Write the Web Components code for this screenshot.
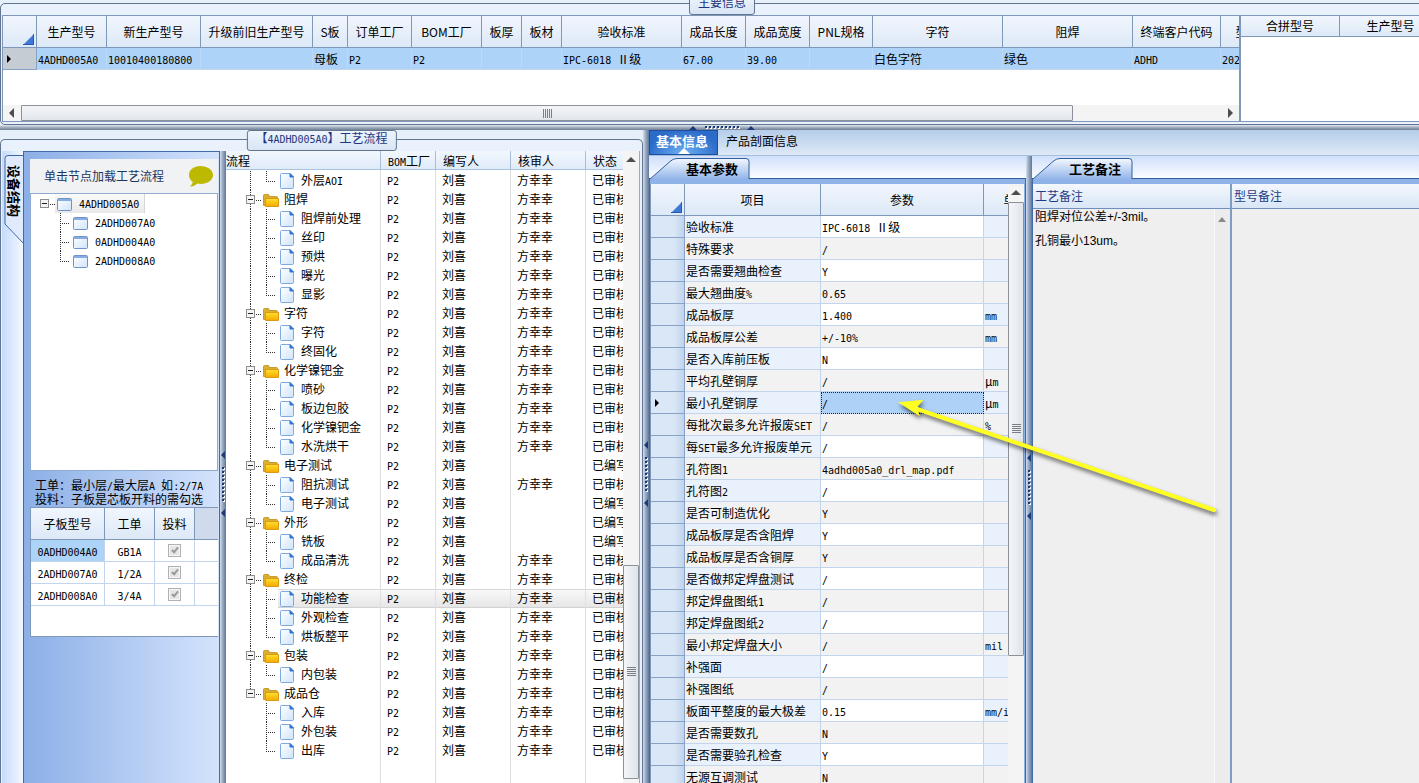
<!DOCTYPE html>
<html lang="zh-CN">
<head>
<meta charset="utf-8">
<title>工艺流程</title>
<style>
  html, body {
    margin: 0;
    height: 100%;
    overflow: hidden;
  }
  body {
    font-family: "Noto Sans CJK SC", sans-serif;
    font-size: 12px;
    line-height: 16px;
    color: #000;
    background: #e6f0fb;
  }
</style>
</head>
<body>
<process-app></process-app>

<script>
/** Rules that every component starts from. */
const baseStyle = `
  *, *::before, *::after { box-sizing: border-box; }
  table { border-collapse: separate; border-spacing: 0; table-layout: fixed; }
  th, td { padding: 0; font-weight: normal; white-space: nowrap; overflow: hidden; }
  button { margin: 0; padding: 0; border: 0; background: none; font: inherit; color: inherit; }
  .latin { font-family: "DejaVu Sans Mono", monospace; font-size: 10px; line-height: 1px; }
`;

/** Wraps the half-width runs of a text so that they take 6px per character. */
function halfWidth(text) {
  return text.replace(/[\x20-\x7e]+/g, (run) => `<span class="latin">${run}</span>`);
}

/** Attaches an open shadow root and fills it. */
function mount(host, style, html) {
  const root = host.shadowRoot || host.attachShadow({ mode: "open" });
  root.innerHTML = `<style>${baseStyle}${style}</style>${html}`;
  return root;
}

// <group-box caption="...">content</group-box>
class GroupBox extends HTMLElement {
  connectedCallback() {
    mount(this, `
      :host { display: flex; position: relative; min-height: 0; padding: 11px 2px 2px 1px;
        border: 1px solid #62748f; border-radius: 5px; background: #e9f2fc; }
      .caption { position: absolute; top: -10px; left: 50%; transform: translateX(-50%); z-index: 2;
        height: 21px; padding: 0 8px; line-height: 14px; white-space: nowrap; color: #1e3580;
        border: 1px solid #62748f; border-radius: 3px; background: linear-gradient(#eef4fc, #d8e5f5); }
    `, `<div class="caption">${halfWidth(this.getAttribute("caption"))}</div><slot></slot>`);
  }
}
customElements.define("group-box", GroupBox);

// <split-bar vertical></split-bar>, with the grip in its middle
class SplitBar extends HTMLElement {
  connectedCallback() {
    mount(this, `
      :host { display: flex; flex: none; align-items: center; justify-content: center; height: 5px; overflow: hidden;
        background: linear-gradient(#e3e9f1, #aab6c5 40%, #6f7f93); }
      :host([vertical]) { flex-direction: column; height: auto; width: 6px;
        background: linear-gradient(90deg, #d3dfee, #9fb0c6 40%, #5f7697); }
      svg { display: block; flex: none; }
    `, this.hasAttribute("vertical")
      ? `<svg width="6" height="66" viewBox="0 0 6 66"><path d="M5 0v8l-4-4zM5 58v8l-4-4z" fill="#1d3a78"/>
         <path d="M3 16v34" stroke="#fff" stroke-width="2" stroke-dasharray="2 2" transform="translate(1 1)"/>
         <path d="M3 16v34" stroke="#1d3a78" stroke-width="2" stroke-dasharray="2 2"/></svg>`
      : `<svg width="66" height="5" viewBox="0 0 66 5"><path d="M0 5h8l-4-4zM58 5h8l-4-4z" fill="#1d3a78"/>
         <path d="M16 2h34" stroke="#fff" stroke-width="2" stroke-dasharray="2 2" transform="translate(1 1)"/>
         <path d="M16 2h34" stroke="#1d3a78" stroke-width="2" stroke-dasharray="2 2"/></svg>`);
  }
}
customElements.define("split-bar", SplitBar);

// <scroll-bar vertical before="1" size="2" after="1"></scroll-bar>
class ScrollBar extends HTMLElement {
  connectedCallback() {
    const part = (name) => this.getAttribute(name) || "0";
    const vertical = this.hasAttribute("vertical");
    const arrow = (d, label) => `<button aria-label="${label}"><svg width="10" height="10"><path d="${d}" fill="#4d4d4d"/></svg></button>`;
    mount(this, `
      :host { display: flex; flex: none; height: 16px; background: #f4f4f5; }
      :host([vertical]) { flex-direction: column; height: auto; width: 16px; }
      button { display: flex; flex: none; align-items: center; justify-content: center; width: 18px; height: 16px; }
      :host([vertical]) button { width: 16px; height: 18px; }
      .thumb { display: flex; align-items: center; justify-content: center; border: 1px solid #8b9099;
        border-radius: 1px; background: linear-gradient(#f4f5f8, #e2e6ec); }
      :host([vertical]) .thumb { background: linear-gradient(90deg, #f4f5f8, #dfe4eb); }
      .thumb i { width: 9px; height: 9px; background: repeating-linear-gradient(90deg, #7b8088 0 1px, transparent 1px 2px); }
      :host([vertical]) .thumb i { background: repeating-linear-gradient(#7b8088 0 1px, transparent 1px 2px); }
    `, `
      ${vertical ? arrow("M0 7h10L5 2z", "上") : arrow("M7 0v10L2 5z", "左")}
      <div style="flex: ${part("before")} 0 0"></div>
      <div class="thumb" style="flex: ${part("size")} 0 0"><i></i></div>
      <div style="flex: ${part("after")} 0 0"></div>
      ${vertical ? "" : arrow("M3 0v10l5-5z", "右")}
    `);
  }
}
customElements.define("scroll-bar", ScrollBar);

/**
 * Grid with a fixed header.
 * columns: [label, width, align], rows: arrays of cell texts.
 * A true value in a cell is drawn as a ticked box.
 */
class DataGrid extends HTMLElement {
  render({ columns, rows, indicator = 0, current = -1 }) {
    const marker = `<svg width="6" height="8"><path d="M1 0v8l4-4z"/></svg>`;
    const width = columns.reduce((sum, column) => sum + column[1], indicator);
    const cell = (value) => value === true
      ? `<input type="checkbox" checked disabled aria-label="投料">`
      : halfWidth(value);
    mount(this, `
      :host { display: block; overflow: hidden; background: #fff; --head: 32px; }
      th { height: var(--head); border-right: 1px solid #7f98ba; border-bottom: 1px solid #7f98ba;
        background: linear-gradient(#f1f6fd, #dde9f7); }
      th.corner { text-align: right; vertical-align: bottom; }
      th.corner svg { display: block; margin: 0 2px 2px auto; }
      td { height: 22px; line-height: 20px; padding-left: 1px; border-right: 1px solid #c3d5ec;
        border-bottom: 1px solid #c3d5ec; }
      td.mark { padding-left: 3px; border-color: #88a2c5; background: linear-gradient(90deg, #dae7f6 70%, #c0d2ed); }
      td.mark svg { display: block; }
      td.center { padding: 0; text-align: center; }
      :host([striped]) tr td:nth-child(2), :host([striped]) tr td:nth-child(4) { background: #e8f1fc; }
      :host([striped]) tbody tr:nth-child(even) td:not(.mark) { background: #f2f2f2; }
      :host([striped]) tr.current td:nth-child(3) { background: #aed2f7; outline: 1px dotted #10254f; outline-offset: -1px; }
      :host([select="row"]) tr.current td { background: #aed3f8; border-right-color: #bcdaf8; }
      :host([select="row"]) tr.current td.mark { background: #c6ccd4; border-right-color: #88a2c5; }
      :host([select="cell"]) tr.current td:first-child { background: #aed3f8; }
      :host([select="cell"]) th:last-child { background: #cfdbec; }
      input { appearance: none; display: block; width: 13px; height: 13px; margin: 0 auto;
        border: 1px solid #b1b1b1; box-shadow: inset 0 0 0 1px #f6f6f6; background: #e6e6e6; }
      input::after { content: ""; display: block; width: 4px; height: 7px; margin: 1px 0 0 4px;
        border: solid #9a9a9a; border-width: 0 2px 2px 0; transform: rotate(40deg); }
    `, `
      <table style="width: ${width}px">
        <colgroup>${indicator ? `<col style="width: ${indicator}px">` : ""}${columns.map((column) => `<col style="width: ${column[1]}px">`).join("")}</colgroup>
        <thead><tr>
          ${indicator ? `<th class="corner"><svg width="11" height="11"><path d="M11 0v11H0z" fill="#3f79d8"/><path d="M10.500 0v10.500H0" fill="none" stroke="#2a58ae"/></svg></th>` : ""}
          ${columns.map((column) => `<th>${column[0]}</th>`).join("")}
        </tr></thead>
        <tbody>
          ${rows.map((row, index) => `<tr class="${index === current ? "current" : ""}">
            ${indicator ? `<td class="mark">${index === current ? marker : ""}</td>` : ""}
            ${row.map((value, i) => `<td class="${columns[i][2] || ""}">${cell(value)}</td>`).join("")}
          </tr>`).join("")}
        </tbody>
      </table>
    `);
  }
}
customElements.define("data-grid", DataGrid);

// Gradients of the tree icons
const iconDefs = `
  <svg width="0" height="0" style="position: absolute"><defs>
    <linearGradient id="page" x2="1" y2="1"><stop stop-color="#fff"/><stop offset="1" stop-color="#cfe4fb"/></linearGradient>
    <linearGradient id="gold" x2="0" y2="1"><stop stop-color="#ffe12e"/><stop offset="1" stop-color="#f6a800"/></linearGradient>
  </defs></svg>
`;
const expander = (x) => `
  <path d="M${x + 10} 10.500h5" stroke="#333" stroke-dasharray="1 1"/>
  <rect x="${x}.500" y="5.500" width="8" height="8" fill="#f4f4f4" stroke="#8d8d8d"/>
  <path d="M${x + 2} 9.500h5" stroke="#222"/>`;
const folderIcon = (x) => `<g transform="translate(${x} 4)">
  <path d="M.500 1.500q0-1 1-1h4l1 2h7q1 0 1 1v8H.500z" fill="#d9ae32" stroke="#c99b28"/>
  <path d="M2.500 12.500v-8h13v8z" fill="url(#gold)" stroke="#d99a15"/></g>`;
const pageIcon = (x) => `<g transform="translate(${x} 2)">
  <path d="M.500 1.500q0-1 1-1H10l3.500 3.500v10.500q0 1-1 1h-11q-1 0-1-1z" fill="url(#page)" stroke="#7fa9df"/>
  <path d="M10 .500V4h3.500z" fill="#2f74d0" stroke="#2f74d0"/></g>`;
const windowIcon = (x) => `<g transform="translate(${x} 4)">
  <rect x=".500" y=".500" width="14" height="12" rx="1" fill="url(#page)" stroke="#6f93c6"/>
  <path d="M1 1h13v2H1z" fill="#86aee4"/></g>`;

/** Tree list of process groups and their steps, with the columns of each. */
class ProcessTree extends HTMLElement {
  render(groups) {
    const rows = [];
    groups.forEach((group, index) => {
      const lastGroup = index === groups.length - 1;
      if (group.name) {
        rows.push(this.row(group, `
          <path d="M24.500 0v${lastGroup ? 10 : 19}" stroke="#333" stroke-dasharray="1 1"/>
          ${expander(20)}${folderIcon(37)}`, 58));
      }
      group.steps.forEach((step, i) => {
        const lastStep = i === group.steps.length - 1;
        rows.push(this.row(step, `
          ${lastGroup ? "" : `<path d="M24.500 0v19" stroke="#333" stroke-dasharray="1 1"/>`}
          <path d="M40.500 0v${lastStep ? 10 : 19}M40 10.500h10" fill="none" stroke="#333" stroke-dasharray="1 1"/>
          ${pageIcon(54)}`, 75));
      });
    });
    mount(this, `
      :host { display: block; flex: 1; min-width: 0; overflow: hidden; background: #fff; }
      table { width: 397px; height: 100%; }
      th { height: 19px; line-height: 17px; padding-left: 7px; text-align: left; border-right: 1px solid #a9bdd8;
        border-bottom: 1px solid #a9c3e3; background: linear-gradient(#f2f7fd, #dfebf9); }
      th:first-child { padding-left: 0; }
      th:last-child, td:last-child { border-right: 0; }
      td { height: 19px; line-height: 17px; padding: 0 0 2px 6px; border-right: 1px solid #dedede; }
      td:first-child { padding: 0; }
      .node { display: flex; height: 19px; padding: 0; }
      .node svg { flex: none; }
      tr.gap td { height: 1px; padding: 0; }
      tr.rest td { height: auto; padding: 0; }
      tr.selected td { border-right-color: #e0e0e0;
        background: linear-gradient(#d8d8d8 1px, #f8f8f8 1px, #e6e6e6 18px, #d2d2d2 18px); }
      tr.selected td:first-child { background: linear-gradient(90deg, #fff 52px, transparent 52px),
        linear-gradient(#d8d8d8 1px, #f8f8f8 1px, #e6e6e6 18px, #d2d2d2 18px); }
    `, `${iconDefs}
      <table>
        <colgroup><col style="width: 155px"><col style="width: 55px"><col style="width: 75px"><col style="width: 75px"><col style="width: 37px"></colgroup>
        <thead><tr>${["流程", "BOM工厂", "编写人", "核审人", "状态"].map((label) => `<th>${halfWidth(label)}</th>`).join("")}</tr></thead>
        <tbody>
          <tr class="gap">${"<td></td>".repeat(5)}</tr>
          ${rows.join("")}
          <tr class="rest">${"<td></td>".repeat(5)}</tr>
        </tbody>
      </table>
    `);
  }

  row(item, drawing, width) {
    return `<tr class="${item.selected ? "selected" : ""}">
      <td><div class="node"><svg width="${width}" height="19">${drawing}</svg><span>${halfWidth(item.name)}</span></div></td>
      <td>${halfWidth("P2")}</td><td>刘喜</td><td>${item.draft ? "" : "方幸幸"}</td><td>${item.draft ? "已编写" : "已审核"}</td>
    </tr>`;
  }
}
customElements.define("process-tree", ProcessTree);

/** Tree of the board and its sub boards. */
class BoardTree extends HTMLElement {
  connectedCallback() {
    const child = (name, last) => `<li><svg width="64" height="19">
      <path d="M29.500 0v${last ? 10 : 19}M29 10.500h10" fill="none" stroke="#333" stroke-dasharray="1 1"/>${windowIcon(42)}</svg><span>${halfWidth(name)}</span></li>`;
    mount(this, `
      :host { display: block; background: #fff; }
      ul { margin: 0; padding: 0; list-style: none; }
      li { display: flex; height: 19px; line-height: 18px; }
      svg { flex: none; }
      .root { width: 114px; background: linear-gradient(90deg, #fff 24px, transparent 24px), linear-gradient(#fafafa, #e9e9e9); box-shadow: inset -1px 0 #d6d6d6; }
    `, `${iconDefs}<ul>
      <li class="root"><svg width="48" height="19">${expander(9)}${windowIcon(26)}</svg><span>${halfWidth("4ADHD005A0")}</span></li>
      ${child("2ADHD007A0")}${child("0ADHD004A0")}${child("2ADHD008A0", true)}
    </ul>`);
  }
}
customElements.define("board-tree", BoardTree);

/** Side panel: vertical tab, board tree and the table of sub boards. */
class StructurePanel extends HTMLElement {
  connectedCallback() {
    const root = mount(this, `
      :host { display: flex; flex: none; width: 218px; }
      .tabs { flex: none; width: 21px; padding-top: 4px; background: linear-gradient(90deg, #c5dbfb, #f3f8ff); }
      .tabs button { position: relative; display: block; width: 21px; height: 91px; }
      .tabs svg { position: absolute; left: 0; top: 0; }
      .tabs span { position: relative; display: block; height: 91px; margin-left: 2px; padding-top: 10px; font-size: 13px; line-height: 20px;
        font-weight: bold; text-align: left; writing-mode: vertical-rl; text-orientation: sideways; }
      .body { display: flex; flex: 1; flex-direction: column; min-width: 0; padding: 7px 1px 0 6px;
        border: solid #416aa8; border-width: 1px 1px 0 1px; background: linear-gradient(90deg, #8bafe7, #d4e3fc); }
      .bar { display: flex; flex: none; height: 35px; align-items: center; justify-content: space-between; padding: 0 5px 0 14px;
        color: #1e3560; border-bottom: 1px solid #8fabd2; background: #f1f2f4; }
      board-tree { flex: none; height: 277px; border: 1px solid #8fabd2; border-top: 0; }
      .hint { margin: 0; padding: 7px 0 1px 5px; line-height: 14px; white-space: nowrap; }
      data-grid { flex: none; height: 130px; border: 1px solid #7f98ba; border-right: 0; }
    `, `
      <div class="tabs"><button><svg width="21" height="91"><path d="M22 .500H6q-3 0-3 3V69L22 89" fill="#dfebfc" stroke="#3d67ab"/></svg><span>设备结构</span></button></div>
      <div class="body">
        <div class="bar"><span>单击节点加载工艺流程</span>
          <svg width="25" height="22"><path d="M12.500 1C19 1 25 4.500 25 10s-6 9-12 9q-2 0-3.500-.400Q6.500 21.500 2 21.500q2.500-2 2.800-4.500Q1 14 1 10c0-5.500 5-9 11.500-9z" fill="#bdb800"/></svg>
        </div>
        <board-tree></board-tree>
        <p class="hint">${halfWidth("工单：最小层/最大层A 如:2/7A")}<br>投料：子板是芯板开料的需勾选</p>
        <data-grid select="cell"></data-grid>
      </div>
    `);
    root.querySelector("data-grid").render({
      columns: [["子板型号", 74, "center"], ["工单", 50, "center"], ["投料", 40, "center"], ["", 24]],
      rows: [
        ["0ADHD004A0", "GB1A", true, ""],
        ["2ADHD007A0", "1/2A", true, ""],
        ["2ADHD008A0", "3/4A", true, ""],
      ],
      current: 0,
    });
  }
}
customElements.define("structure-panel", StructurePanel);

// <notch-panel label="...">content</notch-panel>, a page under a slanted tab
class NotchPanel extends HTMLElement {
  connectedCallback() {
    mount(this, `
      :host { display: flex; flex-direction: column; min-width: 0; min-height: 0; }
      .strip { flex: none; height: 23px; padding: 2px 0 0 1px; border-bottom: 1px solid #315f9f;
        background: linear-gradient(#cfe0fb, #fafcff); }
      button { position: relative; display: block; width: 100px; height: 21px; padding-left: 24px;
        font-size: 13px; line-height: 19px; font-weight: bold; }
      button svg { position: absolute; left: 0; top: 0; }
      button span { position: relative; }
      .page { display: flex; flex: 1; min-height: 0; padding: 5px 1px 0 0; border: solid #416aa8; border-width: 0 1px;
        background: #8fb2e8; }
    `, `
      <div class="strip"><button><svg width="100" height="21">
        <defs><linearGradient id="tab" x2="0" y2="1"><stop stop-color="#f4f8ff"/><stop offset="1" stop-color="#93b5ea"/></linearGradient></defs>
        <path d="M0 21L20 3.500q3-3 7-3h69q3 0 3 3V21" fill="url(#tab)" stroke="#315f9f"/></svg>
        <span>${this.getAttribute("label")}</span></button></div>
      <div class="page"><slot></slot></div>
    `);
  }
}
customElements.define("notch-panel", NotchPanel);

// <note-box label="..." scroll>text</note-box>
class NoteBox extends HTMLElement {
  connectedCallback() {
    const text = this.textContent;
    mount(this, `
      :host { display: flex; flex-direction: column; min-width: 0; background: #efefef; }
      label { height: 25px; padding-left: 2px; line-height: 24px; color: #1f3c86; border-bottom: 1px solid #6f8fbd;
        background: linear-gradient(#f4f8fe, #d9e6f6); }
      .area { display: flex; flex: 1; }
      textarea { flex: 1; min-width: 0; margin: 0; padding: 2px; border: 0; outline: 0; resize: none; overflow: hidden;
        background: none; font: 12px/12px "Liberation Sans", "Noto Sans CJK SC", sans-serif; color: #000; }
      .track { width: 16px; padding: 8px 0 0 3px; border-left: 1px solid #fafafa; background: #ececec; }
      .track svg { display: block; }
    `, `
      <label for="note">${this.getAttribute("label")}</label>
      <div class="area"><textarea id="note" readonly></textarea>
      ${this.hasAttribute("scroll") ? `<div class="track"><svg width="9" height="5"><path d="M0 5h8L4 0z" fill="#8a8a8a"/></svg></div>` : ""}</div>
    `).querySelector("textarea").value = text;
  }
}
customElements.define("note-box", NoteBox);

/** Whole window. */
class ProcessApp extends HTMLElement {
  connectedCallback() {
    // the window runs on past the right and bottom edges of the view
    const root = mount(this, `
      :host { display: flex; flex-direction: column; position: relative; height: 100vh; overflow: hidden; }
      .top { flex: none; height: 122px; margin: 3px -25px 0 0; }
      .across { margin-right: -25px; }
      .orders { display: flex; flex: 1; flex-direction: column; min-width: 0; border: 1px solid #7f98ba; background: #fff; }
      .orders data-grid { flex: 1; }
      .merged { --head: 21px; flex: none; width: 201px; border: 1px solid #7f98ba; }
      .work { display: flex; flex: 1; min-height: 0; margin-bottom: -34px; }
      .flow { flex: none; width: 643px; margin-top: 9px; padding-bottom: 0; border-bottom: 0; border-radius: 5px 5px 0 0; }
      .list { display: flex; flex: 1; min-width: 0; border-right: 1px solid #8fabd2; }
      .main { display: flex; flex: 1; flex-direction: column; min-width: 0; }
      nav { display: flex; flex: none; height: 26px; border-bottom: 1px solid #a6bfdd; background: linear-gradient(#b5cdea, #dde9f7); }
      nav button { position: relative; padding: 0 8px 3px; }
      nav button.active { width: 69px; padding: 0 3px 3px 0; font-size: 13px; font-weight: bold; color: #fff;
        border: 1px solid #1c4fa0; background: radial-gradient(at 50% 100%, #6fb0f4, #2c6cc9 75%); }
      nav svg { position: absolute; left: 28px; bottom: 0; }
      .panels { display: flex; flex: 1; min-height: 0; }
      .params { flex: none; width: 377px; }
      .params data-grid { flex: 1; border-left: 1px solid #7f98ba; }
      .notes { flex: 1; margin-right: -2px; }
      .remark { flex: none; width: 199px; border-right: 2px solid #7f9dc4; }
      .model { flex: 1; }
      .pointer { position: absolute; left: 890px; top: 390px; z-index: 3; filter: drop-shadow(1px 3px 2px rgba(0, 0, 0, .6)); pointer-events: none; }
    `, `
      <group-box class="top" caption="主要信息">
        <div class="orders">
          <data-grid id="orders" select="row"></data-grid>
          <scroll-bar size="1053" after="148"></scroll-bar>
        </div>
        <data-grid id="merged" class="merged"></data-grid>
      </group-box>
      <split-bar class="across"></split-bar>
      <div class="work">
        <group-box class="flow" caption="【4ADHD005A0】工艺流程">
          <structure-panel></structure-panel>
          <split-bar vertical></split-bar>
          <div class="list">
            <process-tree></process-tree>
            <scroll-bar vertical before="397" size="213" after="38"></scroll-bar>
          </div>
        </group-box>
        <split-bar vertical></split-bar>
        <div class="main">
          <nav>
            <button class="active">基本信息<svg width="12" height="6"><path d="M0 6h12L6 0z" fill="#fff"/></svg></button>
            <button>产品剖面信息</button>
          </nav>
          <div class="panels">
            <notch-panel class="params" label="基本参数">
              <data-grid id="params" striped></data-grid>
              <scroll-bar vertical size="453" after="162"></scroll-bar>
            </notch-panel>
            <split-bar vertical></split-bar>
            <notch-panel class="notes" label="工艺备注">
              <note-box class="remark" label="工艺备注" scroll>阻焊对位公差+/-3mil。\n\n孔铜最小13um。</note-box>
              <note-box class="model" label="型号备注"></note-box>
            </notch-panel>
          </div>
        </div>
      </div>
      <svg class="pointer" width="340" height="130"><path d="M24 18L324 120" stroke="#ff2" stroke-width="4" stroke-linecap="round"/><path d="M11 13L31 11 26 17 28 24z" fill="#ff2" stroke="#ff2" stroke-width="2"/></svg>
    `);

    root.querySelector("#orders").render({
      indicator: 34,
      current: 0,
      columns: [
        ["生产型号", 70], ["新生产型号", 94], ["升级前旧生产型号", 112], ["S板", 35], ["订单工厂", 64],
        ["BOM工厂", 70], ["板厚", 40], ["板材", 40], ["验收标准", 120], ["成品长度", 64], ["成品宽度", 64],
        ["PNL规格", 63], ["字符", 130], ["阻焊", 130], ["终端客户代码", 88], ["型", 42],
      ],
      rows: [["4ADHD005A0", "10010400180800", "", "母板", "P2", "P2", "", "", "IPC-6018 Ⅱ级", "67.00", "39.00", "",
        "白色字符", "绿色", "ADHD", "202"]],
    });
    root.querySelector("#merged").render({ columns: [["合拼型号", 99], ["生产型号", 102]], rows: [] });

    root.querySelector("process-tree").render([
      { steps: [{ name: "外层AOI" }] },
      { name: "阻焊", steps: [{ name: "阻焊前处理" }, { name: "丝印" }, { name: "预烘" }, { name: "曝光" }, { name: "显影" }] },
      { name: "字符", steps: [{ name: "字符" }, { name: "终固化" }] },
      { name: "化学镍钯金", steps: [{ name: "喷砂" }, { name: "板边包胶" }, { name: "化学镍钯金" }, { name: "水洗烘干" }] },
      { name: "电子测试", draft: true, steps: [{ name: "阻抗测试" }, { name: "电子测试", draft: true }] },
      { name: "外形", draft: true, steps: [{ name: "铣板", draft: true }, { name: "成品清洗" }] },
      { name: "终检", steps: [{ name: "功能检查", selected: true }, { name: "外观检查" }, { name: "烘板整平" }] },
      { name: "包装", steps: [{ name: "内包装" }] },
      { name: "成品仓", steps: [{ name: "入库" }, { name: "外包装" }, { name: "出库" }] },
    ]);

    root.querySelector("#params").render({
      indicator: 34,
      current: 8,
      columns: [["项目", 136], ["参数", 163], ["单位", 64]],
      rows: [
        ["验收标准", "IPC-6018 Ⅱ级", ""],
        ["特殊要求", "/", ""],
        ["是否需要翘曲检查", "Y", ""],
        ["最大翘曲度%", "0.65", ""],
        ["成品板厚", "1.400", "mm"],
        ["成品板厚公差", "+/-10%", "mm"],
        ["是否入库前压板", "N", ""],
        ["平均孔壁铜厚", "/", "μm"],
        ["最小孔壁铜厚", "/", "μm"],
        ["每批次最多允许报废SET", "/", "%"],
        ["每SET最多允许报废单元", "/", ""],
        ["孔符图1", "4adhd005a0_drl_map.pdf", ""],
        ["孔符图2", "/", ""],
        ["是否可制造优化", "Y", ""],
        ["成品板厚是否含阻焊", "Y", ""],
        ["成品板厚是否含铜厚", "Y", ""],
        ["是否做邦定焊盘测试", "/", ""],
        ["邦定焊盘图纸1", "/", ""],
        ["邦定焊盘图纸2", "/", ""],
        ["最小邦定焊盘大小", "/", "mil"],
        ["补强面", "/", ""],
        ["补强图纸", "/", ""],
        ["板面平整度的最大极差", "0.15", "mm/i"],
        ["是否需要数孔", "N", ""],
        ["是否需要验孔检查", "Y", ""],
        ["无源互调测试", "N", ""],
        ["", "", ""],
      ],
    });
  }
}
customElements.define("process-app", ProcessApp);
</script>
</body>
</html>
